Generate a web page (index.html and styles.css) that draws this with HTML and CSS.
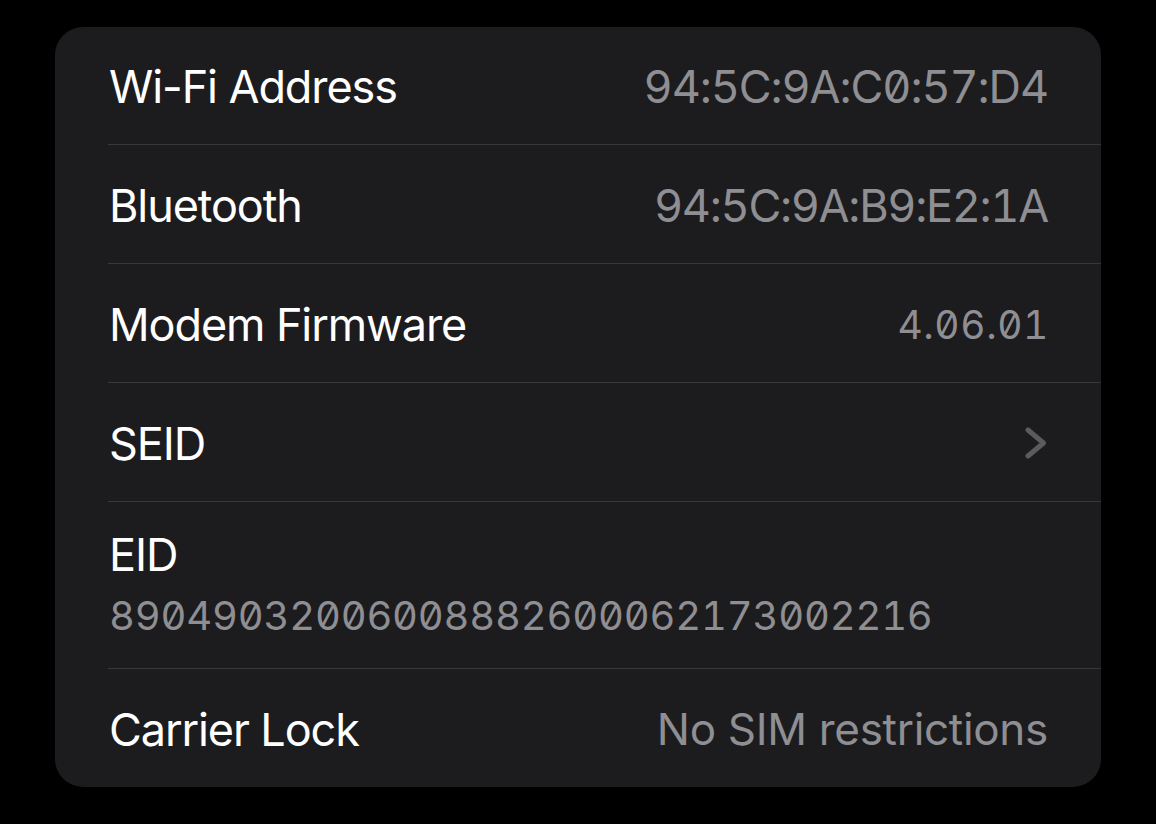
FILE: index.html
```html
<!DOCTYPE html>
<html lang="en">
<head>
<meta charset="utf-8">
<title>About</title>
<link rel="stylesheet" href="styles.css">
</head>
<body>
<div class="card">
  <div class="row">
    <span class="label">Wi-Fi Address</span>
    <span class="value mono mac">94:5C:9A:C0:57:D4</span>
  </div>
  <div class="row">
    <span class="label">Bluetooth</span>
    <span class="value mono mac bt">94:5C:9A:B9:E2:1A</span>
  </div>
  <div class="row">
    <span class="label">Modem Firmware</span>
    <span class="value mono fw">4.06.01</span>
  </div>
  <div class="row">
    <span class="label">SEID</span>
    <svg class="chev" width="22" height="32" viewBox="0 0 22 32" aria-hidden="true">
      <path d="M3 3 L18.5 16 L3 29" fill="none" stroke="#5b5b5f" stroke-width="5" stroke-linecap="round" stroke-linejoin="round"/>
    </svg>
  </div>
  <div class="row row-stack">
    <span class="label">EID</span>
    <span class="value mono eid">89049032006008882600062173002216</span>
  </div>
  <div class="row">
    <span class="label">Carrier Lock</span>
    <span class="value carrier">No SIM restrictions</span>
  </div>
</div>
</body>
</html>
```
FILE: styles.css
```css
html, body {
  margin: 0;
  padding: 0;
  background: #000;
}
body {
  padding: 27px 55px 0 55px;
  font-family: Inter, "Noto Sans", sans-serif;
}
.card {
  width: 1046px;
  background: #1c1c1e;
  border-radius: 28px;
  overflow: hidden;
}
.row {
  display: flex;
  align-items: center;
  justify-content: space-between;
  height: 119px;
  margin-left: 53px;
  padding-left: 1px;
  padding-right: 53px;
  padding-top: 2px;
  border-bottom: 1px solid #38383a;
  box-sizing: border-box;
}
.row:first-child {
  height: 118px;
}
.row:last-child {
  border-bottom: none;
  height: 118px;
}
.label {
  color: #fff;
  font-size: 45px;
  letter-spacing: -1.1px;
}
.value {
  color: #8e8e93;
  font-size: 45px;
  letter-spacing: -1.1px;
}
.mono {
  font-feature-settings: "tnum" 1, "zero" 1;
}
.bt {
  letter-spacing: -1.3px;
}
.fw {
  font-size: 39px;
  letter-spacing: 0.6px;
  margin-right: -1px;
}
.carrier {
  font-size: 44px;
  letter-spacing: -0.3px;
}
.chev {
  display: block;
  margin-right: 1px;
}
.row-stack {
  flex-direction: column;
  align-items: flex-start;
  justify-content: flex-start;
  height: 167px;
  padding-top: 26px;
}
.row-stack .label {
  line-height: 54px;
}
.eid {
  font-size: 40px;
  letter-spacing: -0.2px;
  line-height: 68px;
}
```
